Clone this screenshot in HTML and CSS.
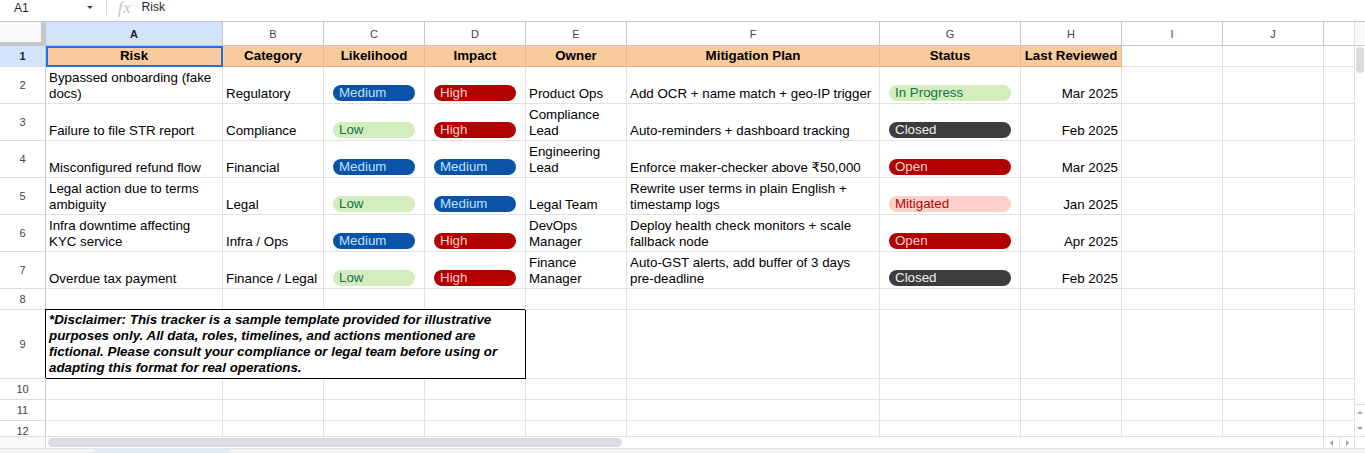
FILE: index.html
```html
<!doctype html>
<html lang="en">
<head>
    <meta charset="UTF-8">
    <title>Risk Tracker</title>
    <link rel="stylesheet" href="styles.css">
</head>
<body>
<div class="formulaBar">
    <div class="nameBox"><span>A1</span><i class="caret"></i></div>
    <span class="fx">fx</span>
    <span class="formula">Risk</span>
</div>

<div class="main">
    <div class="sheet">
        <div class="grid">
            <div class="row colHead">
                <div class="c corner"></div>
                <div class="c ch sel">A</div>
                <div class="c ch">B</div>
                <div class="c ch">C</div>
                <div class="c ch">D</div>
                <div class="c ch">E</div>
                <div class="c ch">F</div>
                <div class="c ch">G</div>
                <div class="c ch">H</div>
                <div class="c ch">I</div>
                <div class="c ch">J</div>
                <div class="c ch last"></div>
            </div>

            <div class="row short">
                <div class="c rh sel">1</div>
                <div class="c hd active">Risk</div>
                <div class="c hd">Category</div>
                <div class="c hd">Likelihood</div>
                <div class="c hd">Impact</div>
                <div class="c hd">Owner</div>
                <div class="c hd">Mitigation Plan</div>
                <div class="c hd">Status</div>
                <div class="c hd">Last Reviewed</div>
                <div class="c"></div>
                <div class="c"></div>
                <div class="c last"></div>
            </div>

            <div class="row tall">
                <div class="c rh">2</div>
                <div class="c">Bypassed onboarding (fake docs)</div>
                <div class="c">Regulatory</div>
                <div class="c"><div class="pill blue">Medium</div></div>
                <div class="c"><div class="pill red">High</div></div>
                <div class="c">Product Ops</div>
                <div class="c"><div>Add OCR + name match + <span class="nw">geo-IP</span> trigger</div></div>
                <div class="c"><div class="pill green">In Progress</div></div>
                <div class="c r">Mar 2025</div>
                <div class="c"></div>
                <div class="c"></div>
                <div class="c last"></div>
            </div>

            <div class="row tall">
                <div class="c rh">3</div>
                <div class="c">Failure to file STR report</div>
                <div class="c">Compliance</div>
                <div class="c"><div class="pill green">Low</div></div>
                <div class="c"><div class="pill red">High</div></div>
                <div class="c">Compliance Lead</div>
                <div class="c"><div><span class="nw">Auto-reminders</span> + dashboard tracking</div></div>
                <div class="c"><div class="pill dark">Closed</div></div>
                <div class="c r">Feb 2025</div>
                <div class="c"></div>
                <div class="c"></div>
                <div class="c last"></div>
            </div>

            <div class="row tall">
                <div class="c rh">4</div>
                <div class="c">Misconfigured refund flow</div>
                <div class="c">Financial</div>
                <div class="c"><div class="pill blue">Medium</div></div>
                <div class="c"><div class="pill blue">Medium</div></div>
                <div class="c">Engineering Lead</div>
                <div class="c"><div>Enforce <span class="nw">maker-checker</span> above ₹50,000</div></div>
                <div class="c"><div class="pill red">Open</div></div>
                <div class="c r">Mar 2025</div>
                <div class="c"></div>
                <div class="c"></div>
                <div class="c last"></div>
            </div>

            <div class="row tall">
                <div class="c rh">5</div>
                <div class="c">Legal action due to terms ambiguity</div>
                <div class="c">Legal</div>
                <div class="c"><div class="pill green">Low</div></div>
                <div class="c"><div class="pill blue">Medium</div></div>
                <div class="c">Legal Team</div>
                <div class="c">Rewrite user terms in plain English + timestamp logs</div>
                <div class="c"><div class="pill pink">Mitigated</div></div>
                <div class="c r">Jan 2025</div>
                <div class="c"></div>
                <div class="c"></div>
                <div class="c last"></div>
            </div>

            <div class="row tall">
                <div class="c rh">6</div>
                <div class="c">Infra downtime affecting KYC service</div>
                <div class="c">Infra / Ops</div>
                <div class="c"><div class="pill blue">Medium</div></div>
                <div class="c"><div class="pill red">High</div></div>
                <div class="c">DevOps Manager</div>
                <div class="c">Deploy health check monitors + scale fallback node</div>
                <div class="c"><div class="pill red">Open</div></div>
                <div class="c r">Apr 2025</div>
                <div class="c"></div>
                <div class="c"></div>
                <div class="c last"></div>
            </div>

            <div class="row tall">
                <div class="c rh">7</div>
                <div class="c">Overdue tax payment</div>
                <div class="c">Finance / Legal</div>
                <div class="c"><div class="pill green">Low</div></div>
                <div class="c"><div class="pill red">High</div></div>
                <div class="c">Finance Manager</div>
                <div class="c"><div><span class="nw">Auto-GST</span> alerts, add buffer of 3 days <span class="nw">pre-deadline</span></div></div>
                <div class="c"><div class="pill dark">Closed</div></div>
                <div class="c r">Feb 2025</div>
                <div class="c"></div>
                <div class="c"></div>
                <div class="c last"></div>
            </div>

            <div class="row short">
                <div class="c rh">8</div>
                <div class="c"></div>
                <div class="c"></div>
                <div class="c"></div>
                <div class="c"></div>
                <div class="c"></div>
                <div class="c"></div>
                <div class="c"></div>
                <div class="c"></div>
                <div class="c"></div>
                <div class="c"></div>
                <div class="c last"></div>
            </div>

            <div class="row noteRow">
                <div class="c rh">9</div>
                <div class="c note">*Disclaimer: This tracker is a sample template provided for illustrative purposes only. All data, roles, timelines, and actions mentioned are fictional. Please consult your compliance or legal team before using or adapting this format for real operations.</div>
                <div class="c"></div>
                <div class="c"></div>
                <div class="c"></div>
                <div class="c"></div>
                <div class="c"></div>
                <div class="c"></div>
                <div class="c last"></div>
            </div>

            <div class="row short">
                <div class="c rh">10</div>
                <div class="c"></div>
                <div class="c"></div>
                <div class="c"></div>
                <div class="c"></div>
                <div class="c"></div>
                <div class="c"></div>
                <div class="c"></div>
                <div class="c"></div>
                <div class="c"></div>
                <div class="c"></div>
                <div class="c last"></div>
            </div>

            <div class="row short">
                <div class="c rh">11</div>
                <div class="c"></div>
                <div class="c"></div>
                <div class="c"></div>
                <div class="c"></div>
                <div class="c"></div>
                <div class="c"></div>
                <div class="c"></div>
                <div class="c"></div>
                <div class="c"></div>
                <div class="c"></div>
                <div class="c last"></div>
            </div>

            <div class="row short">
                <div class="c rh">12</div>
                <div class="c"></div>
                <div class="c"></div>
                <div class="c"></div>
                <div class="c"></div>
                <div class="c"></div>
                <div class="c"></div>
                <div class="c"></div>
                <div class="c"></div>
                <div class="c"></div>
                <div class="c"></div>
                <div class="c last"></div>
            </div>
        </div>

        <div class="hscroll">
            <div class="hcorner"></div>
            <div class="track"><div class="thumb"></div></div>
            <div class="btn"><i class="tri left"></i></div>
            <div class="btn"><i class="tri right"></i></div>
        </div>
    </div>

    <div class="vscroll">
        <div class="vtop"></div>
        <div class="vtrack"><div class="vthumb"></div></div>
        <div class="vbtns">
            <i class="tri up"></i>
            <i class="tri down"></i>
        </div>
        <div class="vend"></div>
    </div>
</div>

<div class="tabs">
    <div class="tab"></div>
</div>
</body>
</html>
```

FILE: styles.css
```css
* {
    margin: 0;
    padding: 0;
    box-sizing: border-box;
}

html, body {
    height: 100%;
    overflow: hidden;
}

body {
    background: #fff;
    font-family: "Liberation Sans", Arial, "DejaVu Sans", sans-serif;
    font-size: 13.33px;
    color: #000;
}

/* formula bar */

.formulaBar {
    height: 22px;
    border-bottom: 1px solid #c7c7c7;
    display: flex;
    align-items: flex-start;
}

.nameBox {
    width: 107px;
    height: 15px;
    display: flex;
    align-items: center;
    padding-left: 14px;
    font-size: 12px;
    color: #1f1f1f;
    border-right: 1px solid #dadce0;
}

.nameBox .caret {
    margin-left: auto;
    margin-right: 13px;
    width: 0;
    height: 0;
    border-left: 3px solid transparent;
    border-right: 3px solid transparent;
    border-top: 3px solid #444;
}

.fx {
    margin-left: 11px;
    font-family: "Liberation Serif", serif;
    font-style: italic;
    font-size: 16px;
    line-height: 16px;
    color: #c4c4c4;
    letter-spacing: 1px;
}

.formula {
    margin-left: 10px;
    font-size: 12px;
    line-height: 15px;
    color: #1f1f1f;
}

/* sheet */

.main {
    display: flex;
    height: 426px;
}

.sheet {
    width: 1354px;
}

.grid {
    height: 414px;
    overflow: hidden;
}

.row {
    display: grid;
    grid-template-columns: 46px 177px 101px 101px 101px 101px 253px 141px 101px 101px 101px 30px;
}

.colHead { height: 24px; }
.short { height: 21px; }
.tall { height: 37px; }
.noteRow { height: 69px; }

.c {
    display: flex;
    flex-direction: column;
    justify-content: flex-end;
    border-right: 1px solid #e2e2e3;
    border-bottom: 1px solid #e2e2e3;
    padding: 0 3px 1px;
    line-height: 16px;
    overflow: hidden;
}

.nw {
    white-space: nowrap;
}

.c.last {
    border-right: none;
}

.c.r {
    text-align: right;
}

.ch {
    justify-content: center;
    text-align: center;
    padding: 0;
    font-size: 11px;
    color: #444;
    border-right-color: #c7c7c7;
    border-bottom-color: #c7c7c7;
}

.corner {
    background: #f8f9fa;
    border-right: 5px solid #c7c7c7;
    border-bottom: 4px solid #c7c7c7;
    padding: 0;
}

.rh {
    justify-content: center;
    text-align: center;
    padding: 0;
    font-size: 11px;
    color: #444;
    border-right-color: #c7c7c7;
    border-bottom-color: #dcdcdc;
}

.ch.sel, .rh.sel {
    background: #d3e3fd;
    color: #1f1f1f;
    font-weight: bold;
}

.hd {
    background: #f9cb9c;
    font-weight: bold;
    text-align: center;
    padding-bottom: 2px;
    border-right-color: #e9bb8d;
    border-bottom-color: #e3ad7c;
}

.hd.active {
    outline: 2px solid #1a73e8;
    outline-offset: -2px;
}

.note {
    grid-column: span 4;
    font-weight: bold;
    font-style: italic;
    padding-bottom: 2px;
    border-right-color: #000;
    border-bottom-color: #000;
    box-shadow: -1px -1px 0 #000;
}

/* dropdown chips */

.pill {
    margin: 0 6px 1px;
    height: 16px;
    line-height: 16px;
    padding-left: 6px;
    border-radius: 8px;
    white-space: nowrap;
}

.pill.blue {
    background: #0a53a8;
    color: #bfe1f6;
}

.pill.red {
    background: #b10202;
    color: #ffcfc9;
}

.pill.green {
    background: #d4edbc;
    color: #11734b;
}

.pill.dark {
    background: #3d3d3d;
    color: #f1f1f1;
}

.pill.pink {
    background: #ffcfc9;
    color: #b10202;
}

/* scrollbars */

.hscroll {
    display: flex;
    height: 12px;
    border-top: 1px solid #e0e0e0;
}

.hcorner {
    width: 46px;
    background: #f8f9fa;
    border-right: 1px solid #dadce0;
}

.track {
    flex: 1;
    padding: 1px 2px;
}

.thumb {
    width: 574px;
    height: 9px;
    border-radius: 5px;
    background: #dadce0;
}

.btn {
    width: 16px;
    border-left: 1px solid #e0e0e0;
    display: flex;
    align-items: center;
    justify-content: center;
}

.btn + .btn {
    width: 15px;
}

.tri {
    display: block;
    width: 0;
    height: 0;
}

.tri.left {
    border-top: 3px solid transparent;
    border-bottom: 3px solid transparent;
    border-right: 3px solid #9e9e9e;
}

.tri.right {
    border-top: 3px solid transparent;
    border-bottom: 3px solid transparent;
    border-left: 3px solid #9e9e9e;
}

.tri.up {
    border-left: 3px solid transparent;
    border-right: 3px solid transparent;
    border-bottom: 3px solid #9e9e9e;
}

.tri.down {
    border-left: 3px solid transparent;
    border-right: 3px solid transparent;
    border-top: 3px solid #9e9e9e;
}

.vscroll {
    width: 11px;
    border-left: 1px solid #e0e0e0;
    display: flex;
    flex-direction: column;
}

.vtop {
    height: 24px;
    background: #f8f9fa;
    border-bottom: 1px solid #c7c7c7;
}

.vtrack {
    flex: 1;
    padding: 1px 1px;
}

.vthumb {
    width: 8px;
    height: 26px;
    border-radius: 4px;
    background: #dadce0;
}

.vbtns {
    height: 32px;
    border-top: 1px solid #e0e0e0;
    display: flex;
    flex-direction: column;
    align-items: center;
    justify-content: space-around;
}

.vend {
    height: 12px;
    border-top: 1px solid #e0e0e0;
}

/* sheet tabs strip */

.tabs {
    height: 5px;
    background: #f1f3f4;
    border-top: 1px solid #e3e3e3;
}

.tab {
    margin-left: 94px;
    width: 136px;
    height: 100%;
    background: #e1e9f7;
}
```
